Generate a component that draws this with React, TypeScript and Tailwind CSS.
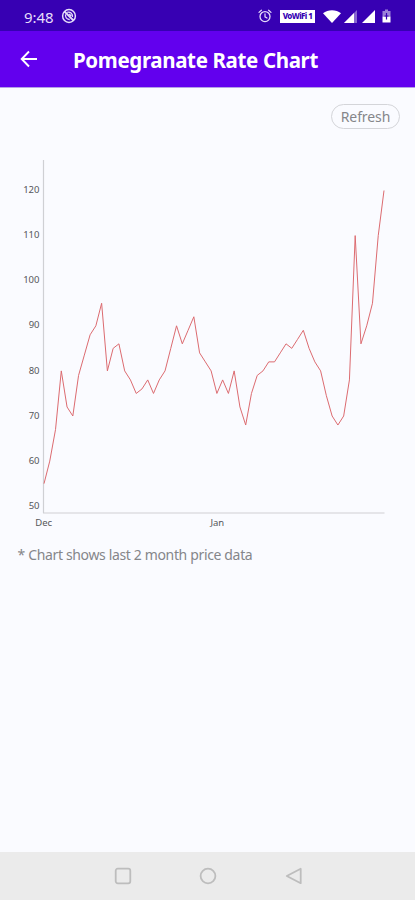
import React from "react";

const prices = [
  55, 60, 67, 80, 72, 70, 79, 83.5, 88, 90, 95, 80, 85, 86, 80, 78, 75, 76, 78, 75,
  78, 80, 85, 90, 86, 89, 92, 84, 82, 80, 75, 78, 75, 80, 72, 68, 75, 79, 80, 82,
  82, 84, 86, 85, 87, 89, 85, 82, 80, 74.5, 70, 68, 70, 78, 110, 86, 90, 95, 110, 120,
];

const ticks = [120, 110, 100, 90, 80, 70, 60, 50];

const LEFT = 44;
const STEP = 340 / (prices.length - 1);

// the chart svg starts 150px below the top of the screen
const toY = (price: number) => 40.5 + (120 - price) * 4.51;

function StatusBar() {
  return (
    <div className="flex h-[31px] items-center bg-[#3700b3] pl-6 pr-6 pt-px text-[#e6defa]">
      <span className="w-[30px] whitespace-nowrap pt-[2px] text-[15px] leading-none tracking-[-0.1px]">9:48</span>
      <svg width="16" height="16" viewBox="0 0 16 16" className="ml-[7px]" fill="none" stroke="currentColor">
        <circle cx="8" cy="8" r="6.4" strokeWidth="1.5" />
        <path d="M3.5 3.5L12.5 12.5" strokeWidth="1.8" />
        <path d="M6.2 4.4C9 3.6 11.9 5.5 11.5 9M4.6 6.3C4 9 5.5 11.6 8.7 11.5M8.2 6L10.2 8" strokeWidth="1.3" />
      </svg>
      <div className="ml-auto flex items-center">
        <svg width="14" height="14" viewBox="0 0 14 14" fill="none" stroke="currentColor" strokeLinecap="round">
          <circle cx="7" cy="7.6" r="5" strokeWidth="1.3" />
          <path d="M7 4.8V7.8L9 9M1 3.4L3.4 1.2M13 3.4L10.6 1.2" strokeWidth="1.2" />
        </svg>
        <span className="ml-[8px] flex h-[13px] w-[35px] items-center justify-center whitespace-nowrap bg-white text-[8px] font-extrabold leading-none tracking-[-0.6px] text-[#3700b3]">
          VoWiFi 1
        </span>
        <svg width="18" height="13" viewBox="0 0 18 13" className="ml-[8px]" fill="#fff">
          <path d="M0 3.3C5 -0.9 13 -0.9 18 3.3L9 13Z" />
        </svg>
        <svg width="13" height="13" viewBox="0 0 13 13" className="ml-[3px]">
          <path d="M13 0V13H0Z" fill="#fff" opacity="0.4" />
          <path d="M10 3V13H0Z" fill="#fff" />
        </svg>
        <svg width="13" height="13" viewBox="0 0 13 13" className="ml-[5px]" fill="#fff">
          <path d="M13 0V13H0Z" />
        </svg>
        <svg width="9" height="14" viewBox="0 0 9 14" className="ml-[7px]">
          <path d="M3 0.5H6V2H8.5V7.5H0.5V2H3Z" fill="#fff" opacity="0.5" />
          <path d="M0.5 7.5H8.5V13.5H0.5Z" fill="#fff" />
          <path d="M4.5 4V10.5M2.5 7H6.5" stroke="#3700b3" strokeWidth="1.2" />
        </svg>
      </div>
    </div>
  );
}

function AppBar() {
  return (
    <header className="flex h-[57px] items-center border-b border-[#b3a0e6] bg-[#6200ee] pl-5 text-white">
      <svg width="18" height="18" viewBox="0 0 18 18" fill="none" stroke="currentColor" strokeWidth="1.9">
        <path d="M17 9H2M9 1.5L1.7 9L9 16.5" />
      </svg>
      <h1 className="ml-[35px] whitespace-nowrap pt-[3px] text-[20.5px] font-bold leading-none tracking-[-0.36px]">
        Pomegranate Rate Chart
      </h1>
    </header>
  );
}

function PriceChart() {
  const points = prices.map((p, i) => `${LEFT + i * STEP},${toY(p)}`).join(" ");

  return (
    <svg width="415" height="386" viewBox="0 0 415 386" className="block">
      <path d="M43.5 10V363M43 363H384.5" fill="none" stroke="#cfd0d4" strokeWidth="1.2" />
      <g fontSize="9.5" fill="#55565a">
        {ticks.map((t) => (
          <text key={t} x="39.5" y={40.5 + (120 - t) * 4.525 + 2} textAnchor="end">
            {t}
          </text>
        ))}
        <text x="43.7" y="376.3" textAnchor="middle">Dec</text>
        <text x="217.3" y="376.3" textAnchor="middle">Jan</text>
      </g>
      <polyline points={points} fill="none" stroke="#dc6b70" strokeWidth="1" strokeLinejoin="round" />
    </svg>
  );
}

function NavBar() {
  return (
    <nav className="flex h-[48px] items-center bg-[#ebebeb] pl-[114px] text-[#bdbdbd]">
      <svg width="18" height="18" viewBox="0 0 18 18" fill="none" stroke="currentColor" strokeWidth="1.8">
        <rect x="1.7" y="1.7" width="14.6" height="14.6" rx="2" />
      </svg>
      <svg width="18" height="18" viewBox="0 0 18 18" className="ml-[67px]" fill="none" stroke="currentColor" strokeWidth="1.8">
        <circle cx="9" cy="9" r="7.4" />
      </svg>
      <svg width="18" height="18" viewBox="0 0 18 18" className="ml-[68px]" fill="none" stroke="currentColor" strokeWidth="1.8" strokeLinejoin="round">
        <path d="M15.7 1.8V16.2L1.8 9Z" />
      </svg>
    </nav>
  );
}

export default function App() {
  return (
    <div className="flex h-[900px] w-[415px] flex-col overflow-hidden bg-[#fafbff] font-['Noto_Sans',sans-serif]">
      <StatusBar />
      <AppBar />
      <main className="flex-1">
        <div className="flex h-[62px] justify-end pr-[15px] pt-4">
          <button className="h-[25px] w-[69px] rounded-full border border-[#d4d5d9] text-[14px] leading-none tracking-[-0.1px] text-[#85868a]">
            Refresh
          </button>
        </div>
        <PriceChart />
        <p className="pl-[17.5px] pt-[9px] text-[14px] leading-5 tracking-[-0.35px] text-[#85868a]">
          * Chart shows last 2 month price data
        </p>
      </main>
      <NavBar />
    </div>
  );
}
